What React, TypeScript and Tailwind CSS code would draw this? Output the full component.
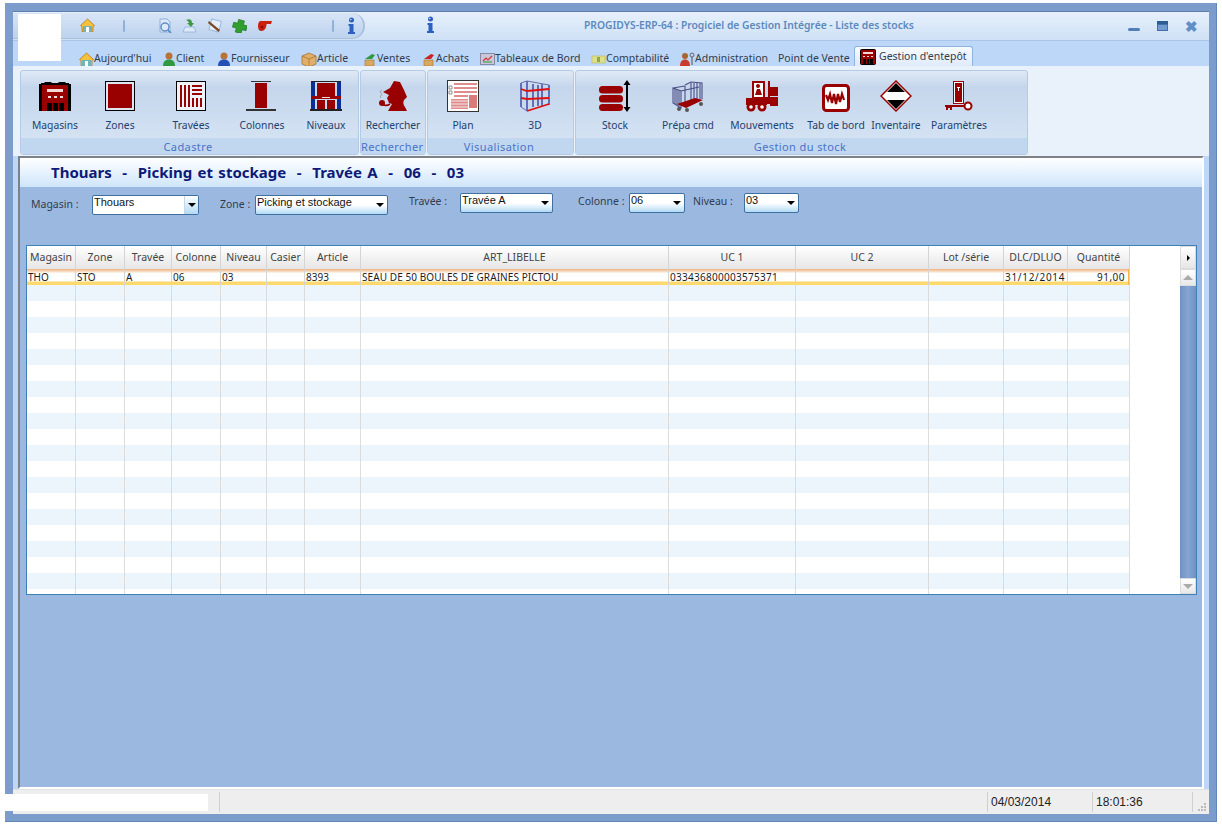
import type { ReactNode } from 'react';

const RED = '#990000';

function Svg({ w = 32, h = 32, vb, children }: { w?: number; h?: number; vb?: string; children: ReactNode }) {
  return (
    <svg width={w} height={h} viewBox={vb ?? `0 0 ${w} ${h}`} className="shrink-0">
      {children}
    </svg>
  );
}

/* ribbon icons */
const MagasinIcon = () => (
  <Svg>
    <path d="M2 3h3l1-1h6l1 1h6l1-1h6l1 1h3v2H2z" fill="#000" />
    <rect x="0" y="4" width="3" height="27" fill="#000" />
    <rect x="29" y="4" width="3" height="27" fill="#000" />
    <rect x="3" y="5" width="26" height="26" fill={RED} />
    <rect x="8" y="9" width="16" height="3" fill="#f3d8d8" />
    <path d="M9 16h3v2H9zM15 16h3v2h-3zM21 16h3v2h-3z" fill="#f3d8d8" />
    <path d="M8 23h5v8H8zM14 23h5v8h-5zM20 23h5v8h-5z" fill="#000" />
  </Svg>
);
const ZoneIcon = () => (
  <Svg>
    <rect x="1.500" y="1.500" width="29" height="29" fill="#dfe6f0" stroke="#000" />
    <rect x="4" y="4" width="24" height="24" fill={RED} />
  </Svg>
);
const TraveeIcon = () => (
  <Svg>
    <rect x="1.500" y="1.500" width="29" height="29" fill="#eef2f8" stroke="#000" />
    <path d="M5 5h2v22H5zM9 5h2v22H9zM13 5h2v22h-2z" fill={RED} />
    <path d="M17 5h10v2H17zM17 9h10v2H17zM17 13h10v2H17z" fill={RED} />
    <path d="M17 18h2v9h-2zM21 18h2v9h-2zM25 18h2v9h-2z" fill={RED} />
  </Svg>
);
const ColonneIcon = () => (
  <Svg>
    <rect x="5" y="1" width="20" height="1" fill="#333" />
    <rect x="9" y="3" width="12" height="25" fill={RED} />
    <rect x="0" y="29" width="30" height="2" fill="#333" />
  </Svg>
);
const NiveauIcon = () => (
  <Svg>
    <rect x="1" y="1" width="30" height="1" fill="#222" />
    <rect x="1" y="2" width="4" height="27" fill="#0b2f97" />
    <rect x="27" y="2" width="4" height="27" fill="#0b2f97" />
    <rect x="7" y="3" width="18" height="13" fill={RED} />
    <rect x="1" y="16" width="30" height="3" fill={RED} />
    <rect x="12" y="17" width="8" height="1" fill="#f3d8d8" />
    <rect x="7" y="20" width="8" height="9" fill={RED} />
    <rect x="17" y="20" width="8" height="9" fill={RED} />
    <rect x="0" y="29" width="32" height="2" fill="#222" />
  </Svg>
);
const SherlockIcon = () => (
  <Svg>
    <path d="M6 12l7-4 4-7 6 1 4 8 3 7-3 3c-1 2-1 5 1 7l2 4H11l4-7-3-1-2-5 2-3z" fill={RED} />
    <circle cx="5" cy="23" r="3" fill={RED} />
    <path d="M5 24c3 2 5 2 8 0" fill="none" stroke={RED} strokeWidth="1.800" />
    <path d="M4 18c-2-2 2-3 0-5s1-3 1-3" fill="none" stroke="#999" strokeWidth="1" />
  </Svg>
);
const PlanIcon = () => (
  <Svg>
    <rect x="0.500" y="0.500" width="31" height="31" fill="#fff" stroke="#333" />
    <path d="M7 3h23v2H7zM7 7h23v2H7zM7 11h23v2H7zM7 15h14v2H7z" fill="#e08c8c" />
    <rect x="22" y="15" width="8" height="13" fill="#d97b7b" />
    <rect x="4" y="19" width="17" height="10" fill="#e08c8c" />
    <path d="M2 6h3v3H2zM2 11h3v3H2z" fill="none" stroke="#777" strokeWidth="0.800" />
    <path d="M4 21h17M4 24h17M4 27h17" stroke="#fff" strokeWidth="0.800" />
  </Svg>
);
const RackIcon = () => (
  <Svg>
    <g fill="none">
      <path d="M2 3v24M8 1v30M14 4v23M19 5v21M23 4v22M30 5v20" stroke="#1f2a9a" strokeWidth="1.200" />
      <path d="M2 3l6-2 22 4M2 27l6 4" stroke="#6a6fb0" strokeWidth="1" />
      <path d="M2 9l6 2 22-2M2 18l6 1 22-1M8 31l22-7" stroke="#e01010" strokeWidth="1.800" />
    </g>
  </Svg>
);
const StockIcon = () => (
  <Svg w={32} h={32}>
    <rect x="0" y="6" width="24" height="7.500" rx="3.500" fill={RED} />
    <rect x="0" y="15" width="24" height="7.500" rx="3.500" fill={RED} />
    <rect x="0" y="24" width="24" height="7" rx="3.500" fill={RED} />
    <path d="M28 0l3.500 5H29v22h2.500L28 32l-3.500-5H27V5h-2.500z" fill="#000" />
  </Svg>
);
const CartIcon = () => (
  <Svg w={34} h={32}>
    <g fill="none" stroke="#4a4f85" strokeWidth="1.100">
      <path d="M2 8v15l8 5V11zM10 11l18-4M2 8l12-2" />
      <path d="M4 9v15M6 10v15M8 11v15M20 3v17M23 3v17" />
      <path d="M14 6v17M14 5l6-3 11 1v16" />
      <path d="M26 3v17M29 3v16" />
    </g>
    <path d="M6 24l18-6 8 2-17 8z" fill={RED} />
    <circle cx="8" cy="29" r="2" fill="#555" />
    <circle cx="16" cy="30" r="2" fill="#555" />
    <circle cx="30" cy="24" r="2" fill="#555" />
  </Svg>
);
const ForkliftIcon = () => (
  <Svg w={33} h={32}>
    <path d="M6 1h13v16h3V1h2v23h-3v-5H6z" fill={RED} />
    <rect x="8" y="3" width="9" height="14" fill="#fff" />
    <circle cx="12" cy="6" r="2" fill={RED} />
    <path d="M9 15l2-6h3l2 6z" fill={RED} />
    <path d="M0 18h21v7H0z" fill={RED} />
    <circle cx="5" cy="27" r="4.500" fill={RED} />
    <circle cx="5" cy="27" r="1.800" fill="#fff" />
    <circle cx="16" cy="27" r="4.500" fill={RED} />
    <circle cx="16" cy="27" r="1.800" fill="#fff" />
    <rect x="24" y="7" width="8" height="9" fill={RED} />
    <rect x="24" y="17" width="8" height="9" fill={RED} />
  </Svg>
);
const TabBordIcon = () => (
  <Svg w={28} h={28}>
    <rect x="1.500" y="1.500" width="25" height="25" rx="3" fill="#fff" stroke={RED} strokeWidth="3" />
    <path d="M4 11l2 5 2-6 2 9 2-9 2 10 2-10 2 8 2-8 2 6" fill="none" stroke={RED} strokeWidth="2.200" />
  </Svg>
);
const InventaireIcon = () => (
  <Svg>
    <path d="M16 1 31 16 16 31 1 16z" fill="#fff" stroke={RED} strokeWidth="1.500" />
    <path d="M16 3 25 12H7zM7 20h18L16 29z" fill="#000" />
  </Svg>
);
const ParamIcon = () => (
  <Svg w={28} h={32}>
    <rect x="8.500" y="1.500" width="10" height="22" fill="#fff" stroke={RED} />
    <rect x="10" y="3" width="7" height="19" fill={RED} />
    <path d="M12 7h3v1h-1v3h-1V8h-1z" fill="#fff" />
    <path d="M0 25h19v2H7v3H5v-2H3v2H1v-3H0z" fill={RED} />
    <circle cx="23" cy="26" r="3.500" fill="#fff" stroke={RED} strokeWidth="2" />
  </Svg>
);

/* tab strip + quick access icons */
const HomeSmall = () => (
  <Svg w={15} h={15}>
    <path d="M7.500 1 14.500 7.500 13 8.500v5H2v-5L.5 7.500z" fill="#f3c13c" stroke="#b87a1a" strokeWidth=".8" />
    <rect x="3" y="8" width="9" height="6" fill="#6fb5b5" />
    <rect x="6" y="9" width="3" height="5" fill="#fff" />
  </Svg>
);
const PersonSmall = ({ color }: { color: string }) => (
  <Svg w={14} h={15}>
    <circle cx="7" cy="4" r="3.500" fill="#b9733a" />
    <path d="M1 14.500c0-5 2-7 6-7s6 2 6 7z" fill={color} />
  </Svg>
);
const BoxSmall = () => (
  <Svg w={16} h={15}>
    <path d="M8 1l7 3v8l-7 3-7-3V4z" fill="#e0b06a" stroke="#a8742e" strokeWidth=".8" />
    <path d="M1 4l7 3 7-3M8 7v8" fill="none" stroke="#a8742e" strokeWidth=".8" />
  </Svg>
);
const BoxTagSmall = ({ color }: { color: string }) => (
  <Svg w={15} h={15}>
    <path d="M3 8h9v6H3z" fill="#d9a860" stroke="#a8742e" strokeWidth=".6" />
    <path d="M3 7 10 2l3 1-3 4z" fill={color} />
  </Svg>
);
const ChartSmall = () => (
  <Svg w={15} h={14}>
    <rect x="0.500" y="1.500" width="14" height="11" fill="#c8c8da" stroke="#8a8aa5" />
    <path d="M3 9l3-3 2 2 4-4" fill="none" stroke="#d33" strokeWidth="1.200" />
    <path d="M3 10h9" stroke="#2a9d3a" />
  </Svg>
);
const MoneySmall = () => (
  <Svg w={15} h={12}>
    <rect x="1" y="3" width="13" height="7" fill="#dfe08c" stroke="#b7b84f" strokeWidth=".6" />
    <rect x="6" y="4" width="3" height="5" fill="#8fa84a" />
  </Svg>
);
const AdminSmall = () => (
  <Svg w={16} h={15}>
    <circle cx="6" cy="4" r="3" fill="#a8662f" />
    <path d="M1 14.500c0-5 2-7 5-7s5 2 5 7z" fill="#c93b2b" />
    <circle cx="13" cy="3" r="2" fill="none" stroke="#666" />
    <path d="M13 5v8" stroke="#666" strokeWidth="1.200" />
  </Svg>
);
const MagasinSmall = () => (
  <Svg w={16} h={16}>
    <rect x="0.500" y="0.500" width="15" height="15" rx="1" fill={RED} stroke="#000" />
    <rect x="3" y="3" width="10" height="2" fill="#f3d8d8" />
    <path d="M3 7h2v1H3zM7 7h2v1H7zM11 7h2v1h-2z" fill="#f3d8d8" />
    <path d="M3 10h3v5H3zM7 10h2v5H7zM10 10h3v5h-3z" fill="#000" />
  </Svg>
);
const InfoSmall = () => (
  <Svg w={9} h={17}>
    <circle cx="4.500" cy="3" r="2.500" fill="#2b5fc0" />
    <path d="M1.500 7h5v8h1.500v2H1v-2h1.500V9h-1z" fill="#2b5fc0" />
    <circle cx="3.800" cy="2.500" r=".8" fill="#cfe0ff" />
  </Svg>
);
const QuickSeparator = () => <div className="w-[2px] h-[12px] bg-[#8fb0d8] rounded-sm shrink-0" />;

function RibbonButton({ w, label, icon }: { w: string; label: string; icon: ReactNode }) {
  return (
    <div className={`${w} shrink-0 flex flex-col items-center`}>
      <div className="h-[34px] flex items-end justify-center">{icon}</div>
      <div className="mt-[6px] whitespace-nowrap text-[10.300px] leading-[14px] text-[#23416f]">{label}</div>
    </div>
  );
}

function RibbonGroup({ w, label, children }: { w: string; label: string; children: ReactNode }) {
  return (
    <div className={`${w} shrink-0 h-[85px] flex flex-col rounded-[3px] border border-[#b5cbe4] bg-gradient-to-b from-[#dfe9f6] via-[#c5d6ec] via-20% to-[#d8e6f5]`}>
      <div className="flex h-[67px] pt-[7px]">{children}</div>
      <div className="h-[16px] pt-[1px] pr-[3px] bg-[#c1d7ef] text-center text-[11px] leading-[15px] tracking-[.4px] text-[#4a73c8]">{label}</div>
    </div>
  );
}

function TabItem({ w, icon, label }: { w: string; icon?: ReactNode; label: string }) {
  return (
    <div className={`${w} shrink-0 flex items-center h-[14px]`}>
      {icon}
      <span className="whitespace-nowrap text-[10.500px] text-[#333c4c]">{label}</span>
    </div>
  );
}

function Combo({ w, value, tall, white }: { w: string; value: string; tall?: boolean; white?: boolean }) {
  return (
    <div className={`${w} ${tall ? 'h-[20px] -mt-[2px]' : 'h-[20px]'} shrink-0 flex rounded-[2px] border border-[#3f709f] ${white ? 'bg-white' : 'bg-gradient-to-b from-white via-white to-[#b2dbf5]'}`}>
      <div className="flex-1 pl-[1px] text-[11px] leading-[13px] text-[#111] font-['Liberation_Sans',sans-serif] whitespace-nowrap">{value}</div>
      <div className={`w-[14px] flex items-center justify-center ${white ? 'bg-gradient-to-b from-white to-[#b2dbf5] border-l border-[#c5d8ea]' : ''}`}>
        <div className="w-0 h-0 border-l-[4px] border-r-[4px] border-t-[4px] border-l-transparent border-r-transparent border-t-black" />
      </div>
    </div>
  );
}

const columns = [
  { name: 'Magasin', w: 'w-[49px]', value: 'THO', track: '' },
  { name: 'Zone', w: 'w-[49px]', value: 'STO', track: '' },
  { name: 'Travée', w: 'w-[47px]', value: 'A', track: '' },
  { name: 'Colonne', w: 'w-[49px]', value: '06', track: '' },
  { name: 'Niveau', w: 'w-[46px]', value: '03', track: '' },
  { name: 'Casier', w: 'w-[38px]', value: '', track: '' },
  { name: 'Article', w: 'w-[56px]', value: '8393', track: '' },
  { name: 'ART_LIBELLE', w: 'w-[308px]', value: 'SEAU DE 50 BOULES DE GRAINES PICTOU', track: 'tracking-[.08px]' },
  { name: 'UC 1', w: 'w-[127px]', value: '033436800003575371', track: 'tracking-[.28px]' },
  { name: 'UC 2', w: 'w-[133px]', value: '', track: '' },
  { name: 'Lot /série', w: 'w-[75px]', value: '', track: '' },
  { name: 'DLC/DLUO', w: 'w-[64px]', value: '31/12/2014', track: 'tracking-[.7px]' },
  { name: 'Quantité', w: 'w-[62px]', value: '91,00', track: 'tracking-[.5px]' },
];

const emptyRows = Array.from({ length: 20 }, (_, i) => i);

export default function App() {
  return (
    <div className="w-[1222px] h-[826px] bg-white pl-[5px] pr-[5px] pt-[3px] pb-[4px] font-['Noto_Sans',sans-serif] overflow-hidden">
      <div className="h-full bg-[#7c9ccb] border-b border-r border-[#6487b5] pl-[8px] pr-[7px] pt-[8px] pb-[7px]">
        <div className="relative h-full flex flex-col bg-[#bcd7f7] border-t border-[#5e7fae]">
          {/* title bar */}
          <div className="h-[29px] shrink-0 flex items-center bg-gradient-to-b from-[#e6f0fb] to-[#cfe1f6] border-b border-[#a9c6ea]">
            <div className="w-[352px] h-[26px] pl-[67px] flex items-center rounded-r-[13px] border-r-2 border-b border-[#a9c0de] bg-gradient-to-b from-[#d8e5f6] to-[#bcd2ee]">
              <HomeSmall />
              <div className="w-[28px] shrink-0" />
              <QuickSeparator />
              <div className="w-[32px] shrink-0" />
              <div className="flex items-center gap-[10px]">
                <Svg w={15} h={15}>
                  <path d="M3 1h7l3 3v10H3z" fill="#dde9f8" stroke="#8fb0d8" />
                  <circle cx="8" cy="9" r="4" fill="none" stroke="#5f8fc8" strokeWidth="1.500" />
                  <path d="M11 12l3 3" stroke="#4f82c0" strokeWidth="1.500" />
                </Svg>
                <Svg w={15} h={15}>
                  <path d="M3 9h9l2 5H1z" fill="#dde9f8" stroke="#8fb0d8" strokeWidth=".8" />
                  <path d="M4 2c4-2 6 0 6 3h2l-3 4-4-4h2c0-1-1-2-3-3z" fill="#3f9a3f" />
                </Svg>
                <Svg w={15} h={15}>
                  <path d="M3 2h10v11H3z" transform="rotate(15 8 8)" fill="#e6eefa" stroke="#8fb0d8" strokeWidth=".8" />
                  <path d="M2 3l11 9-1.500 2L1 5z" fill="#7a4a2a" />
                </Svg>
                <Svg w={15} h={15}>
                  <path d="M5 2h6v4h4v5h-4v4H5v-4H1V6h4z" transform="rotate(15 8 8)" fill="#2fa02f" stroke="#1c6d1c" strokeWidth=".6" />
                </Svg>
                <Svg w={15} h={13}>
                  <path d="M3 2h12l-1 3H9.500c0 4-2 7-5 7C2 12 1 10 1 7s1-4 2-5z" fill="#cc1f10" />
                  <circle cx="5" cy="8" r="1.500" fill="#8f1208" />
                </Svg>
              </div>
              <div className="w-[60px] shrink-0" />
              <QuickSeparator />
              <div className="w-[13px] shrink-0" />
              <InfoSmall />
            </div>
            <div className="ml-[61px] -mt-[3px]"><InfoSmall /></div>
            <div className="ml-[149px] whitespace-nowrap text-[10.300px] font-semibold text-[#5d89bd]">PROGIDYS-ERP-64 : Progiciel de Gestion Intégrée - Liste des stocks</div>
            <div className="ml-auto flex items-center">
              <div className="w-[12px] h-[3px] mt-[7px] bg-[#4f7fb3] rounded-sm" />
              <div className="ml-[17px] w-[11px] h-[10px] bg-[#3f70a8] border-t-[3px] border-[#2d5c92] border-b-0 flex">
                <div className="w-full h-[5px] mt-[1px] mx-[1px] bg-[#6f9bd0]" />
              </div>
              <div className="ml-[17px] mr-[11px] text-[15px] leading-[15px] font-bold text-[#5f8fc4]">✖</div>
            </div>
          </div>

          {/* tab strip */}
          <div className="h-[25px] shrink-0 flex items-end pl-[66px] bg-[#bcd7f7]">
            <TabItem w="w-[83px]" icon={<HomeSmall />} label="Aujourd'hui" />
            <TabItem w="w-[55px]" icon={<PersonSmall color="#2f9a3f" />} label="Client" />
            <TabItem w="w-[84px]" icon={<PersonSmall color="#2450b8" />} label="Fournisseur" />
            <TabItem w="w-[61px]" icon={<BoxSmall />} label="Article" />
            <TabItem w="w-[59px]" icon={<BoxTagSmall color="#2f9a3f" />} label="Ventes" />
            <TabItem w="w-[59px]" icon={<BoxTagSmall color="#cc2222" />} label="Achats" />
            <TabItem w="w-[111px]" icon={<ChartSmall />} label="Tableaux de Bord" />
            <TabItem w="w-[88px]" icon={<MoneySmall />} label="Comptabilité" />
            <TabItem w="w-[99px]" icon={<AdminSmall />} label="Administration" />
            <TabItem w="w-[76px]" label="Point de Vente" />
            <div className="w-[119px] h-[20px] shrink-0 flex items-center gap-[3px] pl-[5px] rounded-t-[3px] border border-b-0 border-[#8fb3df] bg-gradient-to-b from-[#f7fbff] to-[#dfeafa]">
              <MagasinSmall />
              <span className="whitespace-nowrap text-[10.500px] text-[#333c4c]">Gestion d'entepôt</span>
            </div>
          </div>

          {/* ribbon */}
          <div className="h-[90px] shrink-0 flex gap-[1px] pl-[7px] pt-[4px] bg-[#e9f1fb]">
            <RibbonGroup w="w-[339px]" label="Cadastre">
              <RibbonButton w="w-[68px]" label="Magasins" icon={<MagasinIcon />} />
              <RibbonButton w="w-[62px]" label="Zones" icon={<ZoneIcon />} />
              <RibbonButton w="w-[80px]" label="Travées" icon={<TraveeIcon />} />
              <RibbonButton w="w-[62px]" label="Colonnes" icon={<ColonneIcon />} />
              <RibbonButton w="w-[66px]" label="Niveaux" icon={<NiveauIcon />} />
            </RibbonGroup>
            <RibbonGroup w="w-[66px]" label="Rechercher">
              <RibbonButton w="w-[64px]" label="Rechercher" icon={<SherlockIcon />} />
            </RibbonGroup>
            <RibbonGroup w="w-[147px]" label="Visualisation">
              <RibbonButton w="w-[70px]" label="Plan" icon={<PlanIcon />} />
              <RibbonButton w="w-[74px]" label="3D" icon={<RackIcon />} />
            </RibbonGroup>
            <RibbonGroup w="w-[453px]" label="Gestion du stock">
              <RibbonButton w="w-[78px]" label="Stock" icon={<StockIcon />} />
              <RibbonButton w="w-[68px]" label="Prépa cmd" icon={<CartIcon />} />
              <RibbonButton w="w-[80px]" label="Mouvements" icon={<ForkliftIcon />} />
              <RibbonButton w="w-[68px]" label="Tab de bord" icon={<TabBordIcon />} />
              <RibbonButton w="w-[52px]" label="Inventaire" icon={<InventaireIcon />} />
              <RibbonButton w="w-[74px]" label="Paramètres" icon={<ParamIcon />} />
            </RibbonGroup>
          </div>

          {/* main area */}
          <div className="flex-1 min-h-0 pl-[5px] pr-[5px] flex flex-col">
            <div className="flex-1 min-h-0 flex flex-col bg-[#9bb9e0] border-t-2 border-l-2 border-[#7d8188] border-r-2 border-r-white border-b-2 border-b-white">
              <div className="h-[29px] shrink-0 pl-[31px] flex items-center bg-gradient-to-b from-white to-[#cfe5fb] text-[15px] [word-spacing:1.400px] font-bold text-[#0d1a78] whitespace-pre">
                Thouars  -  Picking et stockage  -  Travée A  -  06  -  03
              </div>
              <div className="h-[58px] shrink-0 pl-[11px] pt-[8px] flex items-start text-[10.500px] text-[#333c4c]">
                <span className="w-[61px] pt-[2px] whitespace-nowrap">Magasin :</span>
                <Combo w="w-[107px]" value="Thouars" white />
                <span className="ml-[21px] w-[35px] pt-[2px] whitespace-nowrap">Zone :</span>
                <Combo w="w-[133px]" value="Picking et stockage" />
                <span className="ml-[21px] w-[51px] -mt-[1px] whitespace-nowrap">Travée :</span>
                <Combo w="w-[93px]" value="Travée A" tall />
                <span className="ml-[25px] w-[51px] -mt-[1px] whitespace-nowrap">Colonne :</span>
                <Combo w="w-[56px]" value="06" tall />
                <span className="ml-[8px] w-[51px] -mt-[1px] whitespace-nowrap">Niveau :</span>
                <Combo w="w-[55px]" value="03" tall />
              </div>

              {/* grid */}
              <div className="ml-[6px] mr-[5px] h-[350px] shrink-0 flex flex-col bg-white border border-[#3f80b8]">
                <div className="h-[23px] shrink-0 flex text-[10.500px] text-[#444]">
                  {columns.map((c) => (
                    <div key={c.name} className={`${c.w} shrink-0 flex items-center justify-center border-r border-[#d4d4d4] bg-gradient-to-b from-white to-[#e6e6e6] whitespace-nowrap`}>
                      {c.name}
                    </div>
                  ))}
                  <div className="flex-1 bg-white" />
                  <div className="w-[16px] shrink-0 flex items-center justify-center border border-[#dcdcdc] bg-gradient-to-b from-white to-[#e6e6e6]">
                    <div className="w-0 h-0 border-t-[3px] border-b-[3px] border-l-[3px] border-t-transparent border-b-transparent border-l-black" />
                  </div>
                </div>
                <div className="flex-1 min-h-0 flex">
                  <div className="flex-1 min-w-0 overflow-hidden">
                    <div className="h-[16px] w-[1103px] flex bg-[linear-gradient(to_bottom,#efb27c_0%,#ffffff_28%,#ffffff_72%,#ffd86e_84%,#ffd86e_100%)] border-r-2 border-r-[#f5b54a] text-[10px] leading-[16px] text-[#1c1c1c]">
                      {columns.map((c) => (
                        <div key={c.name} className={`${c.w} ${c.track} h-[16px] shrink-0 border-r border-[#d4d4d4] pl-[1px] whitespace-nowrap ${c.name === 'Quantité' ? 'text-right pr-[4px]' : ''}`}>
                          {c.value}
                        </div>
                      ))}
                    </div>
                    {emptyRows.map((i) => (
                      <div key={i} className={`h-[16px] w-[1103px] flex ${i % 2 === 0 ? 'bg-[#edf5fc]' : 'bg-white'}`}>
                        {columns.map((c) => (
                          <div key={c.name} className={`${c.w} shrink-0 border-r border-[#dcdcdc]`} />
                        ))}
                      </div>
                    ))}
                  </div>
                  <div className="w-[16px] shrink-0 flex flex-col">
                    <div className="h-[17px] shrink-0 flex items-center justify-center border border-[#dcdcdc] bg-gradient-to-b from-white to-[#e8e8e8]">
                      <div className="w-0 h-0 border-l-[5px] border-r-[5px] border-b-[5px] border-l-transparent border-r-transparent border-b-[#aaa]" />
                    </div>
                    <div className="flex-1 bg-gradient-to-r from-[#6f92c4] via-[#86a5d2] to-[#6f92c4]" />
                    <div className="h-[16px] shrink-0 flex items-center justify-center border border-[#dcdcdc] bg-gradient-to-b from-white to-[#e8e8e8]">
                      <div className="w-0 h-0 border-l-[5px] border-r-[5px] border-t-[5px] border-l-transparent border-r-transparent border-t-[#aaa]" />
                    </div>
                  </div>
                </div>
              </div>
            </div>
          </div>

          {/* status bar */}
          <div className="h-[25px] shrink-0 flex items-center bg-[#eeeeee] border-t border-[#e2e2e2] font-['Liberation_Sans',sans-serif] text-[12px] text-[#222]">
            <div className="w-[207px] shrink-0 border-r border-[#cfcfcf] h-[20px]" />
            <div className="w-[768px] shrink-0 border-r border-[#cfcfcf] h-[20px]" />
            <div className="w-[105px] shrink-0 border-r border-[#cfcfcf] h-[20px] pl-[3px] leading-[20px]">04/03/2014</div>
            <div className="w-[100px] shrink-0 border-r border-[#cfcfcf] h-[20px] pl-[3px] leading-[20px]">18:01:36</div>
            <div className="flex-1 h-full flex items-end justify-end pr-[2px] pb-[2px]">
              <Svg w={9} h={9}>
                <path d="M6 0h2v2H6zM3 3h2v2H3zM6 3h2v2H6zM0 6h2v2H0zM3 6h2v2H3zM6 6h2v2H6z" fill="#bbb" />
              </Svg>
            </div>
          </div>

          {/* masked areas of the capture, painted over the window */}
          <div className="absolute left-[5px] top-[2px] w-[43px] h-[47px] bg-white" />
          <div className="absolute -left-[8px] bottom-[3px] w-[203px] h-[17px] bg-white" />
        </div>
      </div>
    </div>
  );
}
